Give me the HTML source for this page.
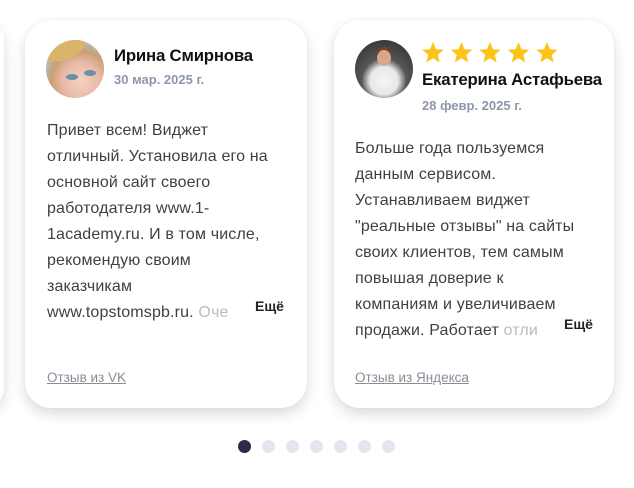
<!DOCTYPE html>
<html><head><meta charset="utf-8"><style>
*{margin:0;padding:0;box-sizing:border-box}
body{width:634px;height:488px;background:#fff;position:relative;overflow:hidden;font-family:"Liberation Sans","DejaVu Sans",sans-serif}
.card{position:absolute;top:20px;width:282px;height:388px;background:#fff;border-radius:26px;box-shadow:0 6px 14px rgba(0,0,0,.14),0 0 3px rgba(0,0,0,.05)}
.av{position:absolute;width:58px;height:58px;border-radius:50%;overflow:hidden}
.name{position:absolute;font-weight:bold;font-size:16.8px;color:#111;white-space:nowrap;letter-spacing:-.2px}
.date{position:absolute;font-weight:bold;font-size:13px;color:#8d96ab;white-space:nowrap}
.txt{position:absolute;font-size:16px;line-height:26px;color:#3e4048;white-space:nowrap;letter-spacing:.15px}
.more{position:absolute;font-weight:bold;font-size:14px;color:#222}
.src{position:absolute;font-size:13.5px;color:#8a8d96;text-decoration:underline;white-space:nowrap}
.dot{position:absolute;top:440px;width:13px;height:13px;border-radius:50%;background:#e1e6ef}
</style></head><body>
<div style="position:absolute;left:-20px;top:20px;width:24px;height:388px;border-radius:0 20px 20px 0;box-shadow:0 6px 14px rgba(0,0,0,.14)"></div>

<div class="card" style="left:25px">
 <div class="av" style="left:21px;top:20px;background:radial-gradient(circle at 60% 70%,#f3d2c4 0,#e9b9a6 35%,#c9a074 55%,#a8c8e0 80%)">
  <div style="position:absolute;left:20px;top:34px;width:12px;height:6px;border-radius:50%;background:#6a8fa8"></div>
  <div style="position:absolute;left:38px;top:30px;width:12px;height:6px;border-radius:50%;background:#6a8fa8"></div>
  <div style="position:absolute;left:-5px;top:-5px;width:45px;height:25px;border-radius:50%;background:#d9b46a;transform:rotate(-20deg)"></div>
 </div>
 <div class="name" style="left:89px;top:26px">Ирина Смирнова</div>
 <div class="date" style="left:89px;top:52px">30 мар. 2025 г.</div>
 <div class="txt" style="left:22px;top:98px">Привет всем! Виджет<br>отличный. Установила его на<br>основной сайт своего<br>работодателя www.1-<br>1academy.ru. И в том числе,<br>рекомендую своим<br>заказчикам<br>www.topstomspb.ru. <span style="color:#bbb">Оче</span></div>
 <div class="more" style="left:230px;top:278px">Ещё</div>
 <div class="src" style="left:22px;top:350px">Отзыв из VK</div>
</div>

<div class="card" style="left:334px;width:280px">
 <div class="av" style="left:21px;top:20px;background:radial-gradient(circle at 50% 70%,#f5f5f5 0,#e8e8e8 28%,#555 45%,#3a3a3a 80%)">
  <div style="position:absolute;left:22px;top:10px;width:14px;height:16px;border-radius:50%;background:#d9a68a;box-shadow:0 -3px 0 #8a3a22"></div>
 </div>
 <svg style="position:absolute;left:88px;top:21px" width="140" height="24" viewBox="0 0 140 24">
  <g fill="#fcc419">
   <path id="s" d="M11 1l3 7.2 7.8.6-6 5 1.9 7.6L11 17.3 4.3 21.4 6.2 13.8l-6-5 7.8-.6z"/>
   <use href="#s" x="28.5"/><use href="#s" x="57"/><use href="#s" x="85.5"/><use href="#s" x="114"/>
  </g>
 </svg>
 <div class="name" style="left:88px;top:50px">Екатерина Астафьева</div>
 <div class="date" style="left:88px;top:78px">28 февр. 2025 г.</div>
 <div class="txt" style="left:21px;top:116px">Больше года пользуемся<br>данным сервисом.<br>Устанавливаем виджет<br>"реальные отзывы" на сайты<br>своих клиентов, тем самым<br>повышая доверие к<br>компаниям и увеличиваем<br>продажи. Работает <span style="color:#bbb">отли</span></div>
 <div class="more" style="left:230px;top:296px">Ещё</div>
 <div class="src" style="left:21px;top:350px">Отзыв из Яндекса</div>
</div>

<div class="dot" style="left:238px;background:#2a2d45"></div>
<div class="dot" style="left:262px"></div>
<div class="dot" style="left:286px"></div>
<div class="dot" style="left:310px"></div>
<div class="dot" style="left:334px"></div>
<div class="dot" style="left:358px"></div>
<div class="dot" style="left:382px"></div>
</body></html>
